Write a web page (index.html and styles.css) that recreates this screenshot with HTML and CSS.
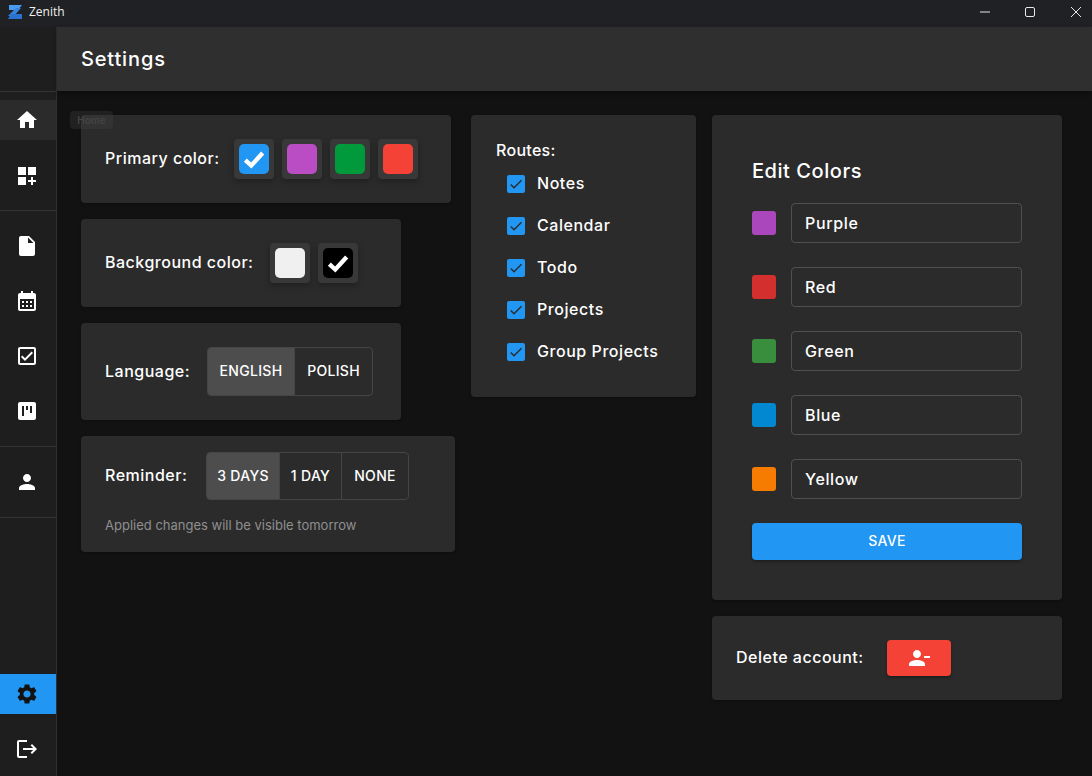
FILE: index.html
```html
<!DOCTYPE html>
<html lang="en">
<head>
    <meta charset="UTF-8">
    <meta name="viewport" content="width=device-width, initial-scale=1.0">
    <title>Zenith</title>
    <link rel="stylesheet" href="styles.css">
</head>
<body>
    <div class="titlebar">
        <svg class="logo" viewBox="0 0 14 14">
            <polygon points="1,0 14,0 10,5 1,5" fill="#4a9af0"/>
            <polygon points="8,3 13,3 6,11 0,11" fill="#3585e0"/>
            <polygon points="3,9 14,9 14,14 0,14" fill="#2a72cf"/>
        </svg>
        <span class="app-name">Zenith</span>
        <div class="window-controls">
            <svg class="win-icon" viewBox="0 0 10 10"><path d="M0 5h10" /></svg>
            <svg class="win-icon" viewBox="0 0 10 10"><rect x="0.5" y="0.5" width="9" height="9" rx="1.5" /></svg>
            <svg class="win-icon" viewBox="0 0 10 10"><path d="M0 0l10 10M10 0L0 10" /></svg>
        </div>
    </div>

    <div class="app">
        <nav class="sidebar">
            <div class="nav-top"></div>
            <div class="nav-section nav-first">
                <a class="nav-item nav-hover"><svg viewBox="0 0 24 24"><path d="M10 20v-6h4v6h5v-8h3L12 3 2 12h3v8z"/></svg></a>
                <a class="nav-item"><svg viewBox="0 0 24 24"><path d="M3 3h8v8H3zm10 0h8v8h-8zM3 13h8v8H3zm15 0h-2v3h-3v2h3v3h2v-3h3v-2h-3z"/></svg></a>
            </div>
            <div class="nav-section">
                <a class="nav-item"><svg viewBox="0 0 24 24"><path d="M6 2c-1.1 0-1.99.9-1.99 2L4 20c0 1.1.89 2 1.99 2H18c1.1 0 2-.9 2-2V8l-6-6H6zm7 7V3.5L18.5 9H13z"/></svg></a>
                <a class="nav-item"><svg viewBox="0 0 24 24"><path d="M19 4h-1V2h-2v2H8V2H6v2H5c-1.11 0-1.99.9-1.99 2L3 20c0 1.1.89 2 2 2h14c1.1 0 2-.9 2-2V6c0-1.1-.9-2-2-2zm0 16H5V10h14v10zM9 14H7v-2h2v2zm4 0h-2v-2h2v2zm4 0h-2v-2h2v2zm-8 4H7v-2h2v2zm4 0h-2v-2h2v2zm4 0h-2v-2h2v2z"/></svg></a>
                <a class="nav-item"><svg viewBox="0 0 24 24"><path d="M19 3H5c-1.1 0-2 .9-2 2v14c0 1.1.9 2 2 2h14c1.1 0 2-.9 2-2V5c0-1.1-.9-2-2-2zm0 16H5V5h14v14zM17.99 9l-1.41-1.42-6.59 6.59-2.58-2.57-1.42 1.41 4 3.99z"/></svg></a>
                <a class="nav-item"><svg viewBox="0 0 24 24"><path fill-rule="evenodd" d="M5 3h14c1.1 0 2 .9 2 2v14c0 1.1-.9 2-2 2H5c-1.1 0-2-.9-2-2V5c0-1.1.9-2 2-2zm2 4v10h2V7H7zm4 0v4h2V7h-2zm4 0v7h2V7h-2z"/></svg></a>
            </div>
            <div class="nav-section">
                <a class="nav-item"><svg viewBox="0 0 24 24"><path d="M12 12c2.21 0 4-1.79 4-4s-1.79-4-4-4-4 1.79-4 4 1.79 4 4 4zm0 2c-2.67 0-8 1.34-8 4v2h16v-2c0-2.66-5.33-4-8-4z"/></svg></a>
            </div>
            <div class="nav-bottom">
                <a class="nav-item nav-active"><svg viewBox="0 0 24 24"><path d="M19.14 12.94c.04-.3.06-.61.06-.94 0-.32-.02-.64-.07-.94l2.03-1.58c.18-.14.23-.41.12-.61l-1.92-3.32c-.12-.22-.37-.29-.59-.22l-2.39.96c-.5-.38-1.03-.7-1.62-.94l-.36-2.54c-.04-.24-.24-.41-.48-.41h-3.84c-.24 0-.43.17-.47.41l-.36 2.54c-.59.24-1.13.57-1.62.94l-2.39-.96c-.22-.08-.47 0-.59.22L2.74 8.87c-.12.21-.08.47.12.61l2.03 1.58c-.05.3-.09.63-.09.94s.02.64.07.94l-2.03 1.58c-.18.14-.23.41-.12.61l1.92 3.32c.12.22.37.29.59.22l2.39-.96c.5.38 1.03.7 1.62.94l.36 2.54c.05.24.24.41.48.41h3.84c.24 0 .44-.17.47-.41l.36-2.54c.59-.24 1.13-.56 1.62-.94l2.39.96c.22.08.47 0 .59-.22l1.92-3.32c.12-.22.07-.47-.12-.61l-2.01-1.58zM12 15.6c-1.98 0-3.6-1.62-3.6-3.6s1.62-3.6 3.6-3.6 3.6 1.62 3.6 3.6-1.62 3.6-3.6 3.6z"/></svg></a>
                <a class="nav-item"><svg viewBox="0 0 24 24"><path d="M17 7l-1.41 1.41L18.17 11H8v2h10.17l-2.58 2.58L17 17l5-5zM4 5h8V3H4c-1.1 0-2 .9-2 2v14c0 1.1.9 2 2 2h8v-2H4V5z"/></svg></a>
            </div>
        </nav>

        <div class="page">
            <header class="header">
                <h1>Settings</h1>
            </header>
            <main class="content">
                <div class="column col-left">
                    <section class="card card-primary">
                        <span class="label">Primary color:</span>
                        <div class="swatches">
                            <button class="swatch-wrap"><span class="swatch blue"><svg viewBox="0 0 24 24"><path d="M4 13l5.5 5L20 6.5"/></svg></span></button>
                            <button class="swatch-wrap"><span class="swatch purple"></span></button>
                            <button class="swatch-wrap"><span class="swatch green"></span></button>
                            <button class="swatch-wrap"><span class="swatch red"></span></button>
                        </div>
                    </section>
                    <section class="card card-background">
                        <span class="label">Background color:</span>
                        <div class="swatches">
                            <button class="swatch-wrap"><span class="swatch light"></span></button>
                            <button class="swatch-wrap"><span class="swatch black"><svg viewBox="0 0 24 24"><path d="M4 13l5.5 5L20 6.5"/></svg></span></button>
                        </div>
                    </section>
                    <section class="card card-language">
                        <span class="label">Language:</span>
                        <div class="toggle">
                            <button class="toggle-btn selected btn-english">English</button>
                            <button class="toggle-btn btn-polish">Polish</button>
                        </div>
                    </section>
                    <section class="card card-reminder">
                        <div class="reminder-row">
                            <span class="label">Reminder:</span>
                            <div class="toggle toggle-reminder">
                                <button class="toggle-btn selected btn-3days">3 days</button>
                                <button class="toggle-btn btn-1day">1 day</button>
                                <button class="toggle-btn btn-none">None</button>
                            </div>
                        </div>
                        <p class="hint">Applied changes will be visible tomorrow</p>
                    </section>
                </div>

                <div class="column col-middle">
                    <section class="card card-routes">
                        <div class="routes-title">Routes:</div>
                        <label class="route"><span class="checkbox"><svg viewBox="0 0 24 24"><path d="M9 16.17 4.83 12l-1.42 1.41L9 19 21 7l-1.41-1.41z"/></svg></span><span class="route-name">Notes</span></label>
                        <label class="route"><span class="checkbox"><svg viewBox="0 0 24 24"><path d="M9 16.17 4.83 12l-1.42 1.41L9 19 21 7l-1.41-1.41z"/></svg></span><span class="route-name">Calendar</span></label>
                        <label class="route"><span class="checkbox"><svg viewBox="0 0 24 24"><path d="M9 16.17 4.83 12l-1.42 1.41L9 19 21 7l-1.41-1.41z"/></svg></span><span class="route-name">Todo</span></label>
                        <label class="route"><span class="checkbox"><svg viewBox="0 0 24 24"><path d="M9 16.17 4.83 12l-1.42 1.41L9 19 21 7l-1.41-1.41z"/></svg></span><span class="route-name">Projects</span></label>
                        <label class="route"><span class="checkbox"><svg viewBox="0 0 24 24"><path d="M9 16.17 4.83 12l-1.42 1.41L9 19 21 7l-1.41-1.41z"/></svg></span><span class="route-name">Group Projects</span></label>
                    </section>
                </div>

                <div class="column col-right">
                    <section class="card card-edit">
                        <h2>Edit Colors</h2>
                        <div class="color-row"><span class="color-dot edit-purple"></span><input class="color-input" type="text" value="Purple"></div>
                        <div class="color-row"><span class="color-dot edit-red"></span><input class="color-input" type="text" value="Red"></div>
                        <div class="color-row"><span class="color-dot edit-green"></span><input class="color-input" type="text" value="Green"></div>
                        <div class="color-row"><span class="color-dot edit-blue"></span><input class="color-input" type="text" value="Blue"></div>
                        <div class="color-row"><span class="color-dot edit-orange"></span><input class="color-input" type="text" value="Yellow"></div>
                        <button class="save-btn">Save</button>
                    </section>
                    <section class="card card-delete">
                        <span class="label">Delete account:</span>
                        <button class="delete-btn"><svg viewBox="0 0 24 24"><path d="M14 8c0-2.21-1.79-4-4-4S6 5.79 6 8s1.79 4 4 4 4-1.79 4-4zm3 2v2h6v-2h-6zM2 18v2h16v-2c0-2.66-5.33-4-8-4s-8 1.34-8 4z"/></svg></button>
                    </section>
                </div>
            </main>
        </div>
    </div>

    <div class="tooltip">Home</div>
</body>
</html>
```

FILE: styles.css
```css
* {
    box-sizing: border-box;
}
body {
    font-family: Inter, "Liberation Sans", sans-serif;
    background-color: #121212;
    color: #ffffff;
    margin: 0;
    width: 1092px;
    height: 776px;
    overflow: hidden;
    display: flex;
    flex-direction: column;
}
button {
    font-family: inherit;
    color: inherit;
    border: none;
    padding: 0;
    cursor: pointer;
}

/* title bar */
.titlebar {
    height: 27px;
    flex-shrink: 0;
    background-color: #202124;
    display: flex;
    align-items: center;
    padding: 0 0 4px 8px;
}
.logo {
    width: 14px;
    height: 14px;
}
.app-name {
    font-family: "Open Sans", sans-serif;
    font-size: 12px;
    margin-left: 7px;
    color: #f0f0f0;
}
.window-controls {
    margin-left: auto;
    display: flex;
    align-items: center;
    gap: 35px;
    padding-right: 11px;
}
.win-icon {
    width: 10px;
    height: 10px;
    fill: none;
    stroke: #e8e8e8;
    stroke-width: 1;
}
.win-icon:last-child {
    margin-left: 1px;
}

/* layout */
.app {
    flex: 1;
    display: flex;
    min-height: 0;
}
.sidebar {
    width: 57px;
    flex-shrink: 0;
    background-color: #1e1e1e;
    border-right: 1px solid #2f2f2f;
    display: flex;
    flex-direction: column;
}
.nav-top {
    height: 65px;
    flex-shrink: 0;
    border-bottom: 1px solid #333;
}
.nav-section {
    display: flex;
    flex-direction: column;
    gap: 15px;
    padding: 15px 0;
    border-bottom: 1px solid #333;
}
.nav-first {
    gap: 16px;
    padding: 8px 0 14px;
}
.nav-bottom {
    margin-top: auto;
    display: flex;
    flex-direction: column;
    gap: 15px;
    padding-bottom: 7px;
}
.nav-item {
    height: 40px;
    display: flex;
    align-items: center;
    justify-content: center;
    padding-right: 2px;
}
.nav-item svg {
    width: 24px;
    height: 24px;
    fill: #ffffff;
}
.nav-hover {
    background-color: #2b2b2b;
}
.nav-active {
    background-color: #2196f3;
}
.nav-active svg {
    fill: #121212;
}

.page {
    flex: 1;
    display: flex;
    flex-direction: column;
    min-width: 0;
}
.header {
    height: 64px;
    flex-shrink: 0;
    background-color: #2f2f2f;
    display: flex;
    align-items: center;
    padding-left: 24px;
    box-shadow: 0 2px 4px rgba(0, 0, 0, 0.3);
}
h1 {
    font-size: 20px;
    font-weight: 450;
    letter-spacing: 0.85px;
    margin: 0;
}
.content {
    display: flex;
    gap: 16px;
    padding: 24px;
    align-items: flex-start;
}
.column {
    display: flex;
    flex-direction: column;
    gap: 16px;
}
.col-left {
    width: 374px;
}
.col-middle {
    width: 225px;
}
.col-right {
    width: 350px;
}

/* cards */
.card {
    background-color: #2b2b2b;
    border-radius: 4px;
    padding: 24px;
    box-shadow: 0 1px 3px rgba(0, 0, 0, 0.3);
}
.card-primary,
.card-background,
.card-language,
.card-delete {
    display: flex;
    align-items: center;
}
.card-primary {
    width: 370px;
}
.card-background,
.card-language {
    width: 320px;
}
.card-reminder {
    padding: 16px 24px 17px;
}
.label {
    font-size: 16px;
    font-weight: 450;
    letter-spacing: 0.5px;
    white-space: nowrap;
    padding-bottom: 2px;
}
.card-primary .label {
    width: 129px;
}
.card-background .label {
    width: 165px;
}
.card-language .label {
    width: 102px;
}
.card-reminder .label {
    width: 101px;
}
.card-delete .label {
    width: 151px;
}

.swatches {
    display: flex;
    gap: 8px;
}
.swatch-wrap {
    width: 40px;
    height: 40px;
    background-color: #383838;
    border-radius: 4px;
    padding: 5px;
    box-shadow: 0 3px 6px rgba(0, 0, 0, 0.25);
}
.swatch {
    display: flex;
    align-items: center;
    justify-content: center;
    width: 30px;
    height: 30px;
    border-radius: 5px;
}
.swatch svg {
    width: 26px;
    height: 26px;
    fill: none;
    stroke: #ffffff;
    stroke-width: 4;
}
.blue { background-color: #2196f3; }
.purple { background-color: #ba4cc4; }
.green { background-color: #009a3c; }
.red { background-color: #f44336; }
.light { background-color: #f0f0f0; }
.black { background-color: #000000; }

.toggle {
    display: flex;
    height: 49px;
    border: 1px solid #454545;
    border-radius: 4px;
    overflow: hidden;
}
.toggle-reminder {
    height: 48px;
}
.toggle-btn {
    background-color: transparent;
    font-size: 14px;
    font-weight: 450;
    letter-spacing: 0.3px;
    text-transform: uppercase;
    border-left: 1px solid #454545;
    padding-bottom: 2px;
}
.toggle-btn:first-child {
    border-left: none;
}
.toggle-btn.selected {
    background-color: #4d4d4d;
}
.btn-english { width: 86px; }
.btn-polish { width: 78px; }
.btn-3days { width: 72px; }
.btn-1day { width: 62px; }
.btn-none { width: 67px; }

.reminder-row {
    display: flex;
    align-items: center;
}
.hint {
    font-size: 13px;
    color: #8f8f8f;
    margin: 15px 0 0;
    line-height: 20px;
}

/* routes */
.routes-title {
    font-size: 16px;
    font-weight: 450;
    letter-spacing: 0.3px;
    line-height: 22px;
    height: 24px;
    padding-left: 1px;
}
.route {
    height: 42px;
    display: flex;
    align-items: center;
    gap: 12px;
    padding-left: 12px;
    font-size: 16px;
    font-weight: 450;
    letter-spacing: 0.55px;
}
.route-name {
    padding-bottom: 2px;
}
.checkbox {
    width: 18px;
    height: 18px;
    background-color: #2196f3;
    border-radius: 2px;
    display: flex;
    align-items: center;
    justify-content: center;
}
.checkbox svg {
    width: 16px;
    height: 16px;
    fill: #2b2b2b;
}

/* edit colors */
.card-edit {
    padding: 40px;
    display: flex;
    flex-direction: column;
    gap: 24px;
}
h2 {
    font-size: 20px;
    font-weight: 450;
    letter-spacing: 0.55px;
    line-height: 32px;
    margin: 0 0 -8px;
}
.color-row {
    display: flex;
    align-items: center;
    gap: 15px;
}
.color-dot {
    width: 24px;
    height: 24px;
    border-radius: 3px;
    flex-shrink: 0;
}
.edit-purple { background-color: #ab47bc; }
.edit-red { background-color: #d32f2f; }
.edit-green { background-color: #388e3c; }
.edit-blue { background-color: #0288d1; }
.edit-orange { background-color: #f57c00; }
.color-input {
    flex: 1;
    min-width: 0;
    height: 40px;
    background-color: transparent;
    border: 1px solid #4f4f4f;
    border-radius: 4px;
    padding: 0 13px;
    font-family: inherit;
    font-size: 16px;
    font-weight: 450;
    letter-spacing: 0.65px;
    color: #ffffff;
}
.save-btn {
    height: 37px;
    background-color: #2196f3;
    border-radius: 4px;
    font-size: 14px;
    font-weight: 450;
    letter-spacing: 0.3px;
    text-transform: uppercase;
    padding-bottom: 2px;
    box-shadow: 0 2px 3px rgba(0, 0, 0, 0.3);
}
.delete-btn {
    width: 64px;
    height: 36px;
    background-color: #f44336;
    border-radius: 4px;
    display: flex;
    align-items: center;
    justify-content: center;
    box-shadow: 0 2px 3px rgba(0, 0, 0, 0.3);
}
.delete-btn svg {
    width: 24px;
    height: 24px;
    fill: #ffffff;
}

/* tooltip left over the content */
.tooltip {
    position: absolute;
    left: 70px;
    top: 111px;
    width: 43px;
    height: 18px;
    background-color: rgba(70, 70, 70, 0.3);
    border-radius: 4px;
    font-size: 10px;
    font-weight: 600;
    line-height: 18px;
    text-align: center;
    color: #444;
}
```
